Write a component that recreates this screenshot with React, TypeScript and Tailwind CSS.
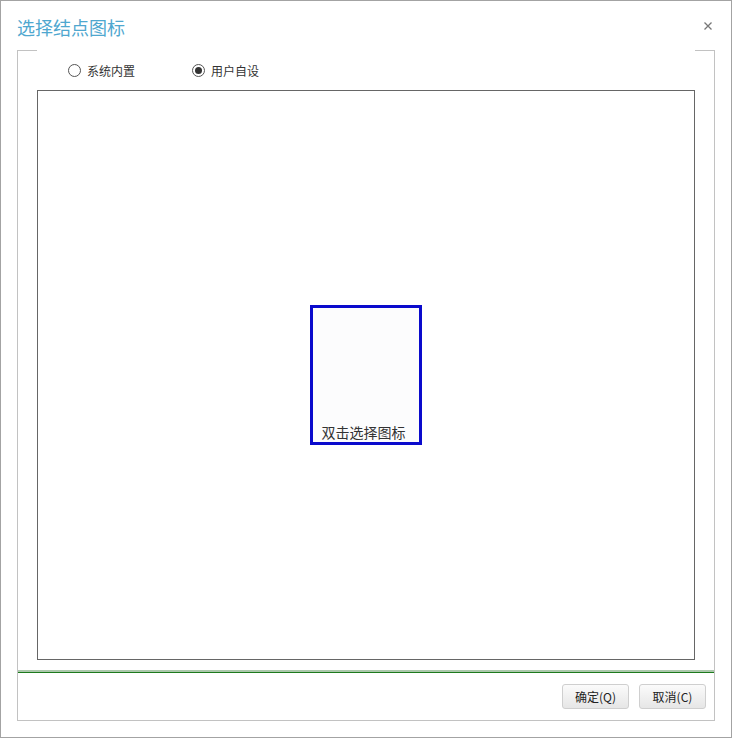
const FONT = "font-['Noto_Sans_CJK_SC','Noto_Sans',sans-serif]";

function Radio({ label, checked }: { label: string; checked?: boolean }) {
  return (
    <label className="flex items-center gap-[6px] text-[12px] leading-[16px] text-[#333]">
      <span className="flex h-[13px] w-[13px] items-center justify-center rounded-full border border-[#555] bg-white">
        {checked && <span className="h-[7px] w-[7px] rounded-full bg-[#333]" />}
      </span>
      {label}
    </label>
  );
}

function Button({ children }: { children: React.ReactNode }) {
  return (
    <button className="flex h-[25px] w-[67px] items-center justify-center rounded-[3px] border border-[#cfcfcf] bg-gradient-to-b from-[#fbfbfb] to-[#e6e6e6] text-[12px] text-[#222]">
      {children}
    </button>
  );
}

export default function App() {
  return (
    <div className={`flex h-[738px] w-[732px] flex-col border border-[#a3a3a3] bg-white ${FONT}`}>
      {/* Title bar */}
      <div className="flex h-[49px] shrink-0 items-start justify-between pl-[16px] pr-[19px]">
        <h1 className="pt-[14px] text-[18px] leading-[24px] font-normal text-[#4fa7cf]">选择结点图标</h1>
        <svg className="mt-[21px]" width="8" height="8" viewBox="0 0 8 8">
          <path d="M0.5 0.5 L7.5 7.5 M7.5 0.5 L0.5 7.5" stroke="#777" strokeWidth="1.3" />
        </svg>
      </div>

      {/* Group box */}
      <div className="ml-[16px] flex h-[671px] w-[698px] flex-col border-x border-b border-[#c2c2c2]">
        <div className="flex h-px shrink-0">
          <span className="w-[19px] bg-[#c2c2c2]" />
          <span className="flex-1" />
          <span className="w-[19px] bg-[#c2c2c2]" />
        </div>

        <div className="flex h-[39px] shrink-0 items-center gap-[57px] pl-[50px]">
          <Radio label="系统内置" />
          <Radio label="用户自设" checked />
        </div>

        <div className="mx-[19px] flex h-[570px] shrink-0 items-center justify-center border border-[#666]">
          <div className="flex h-[140px] w-[112px] flex-col items-center justify-end border-[3px] border-[#0a0acc] bg-[#fcfcfd] pb-[1px] pr-[5px]">
            <span className="text-[14px] leading-[18px] text-[#333]">双击选择图标</span>
          </div>
        </div>

        <div className="mt-[10px] flex shrink-0 flex-col">
          <div className="h-[2px] bg-[#acc8ac]" />
          <div className="h-px bg-[#1d7a1d]" />
        </div>

        <div className="mt-[11px] flex justify-end gap-[10px] pr-[8px]">
          <Button>确定(Q)</Button>
          <Button>取消(C)</Button>
        </div>
      </div>
    </div>
  );
}
